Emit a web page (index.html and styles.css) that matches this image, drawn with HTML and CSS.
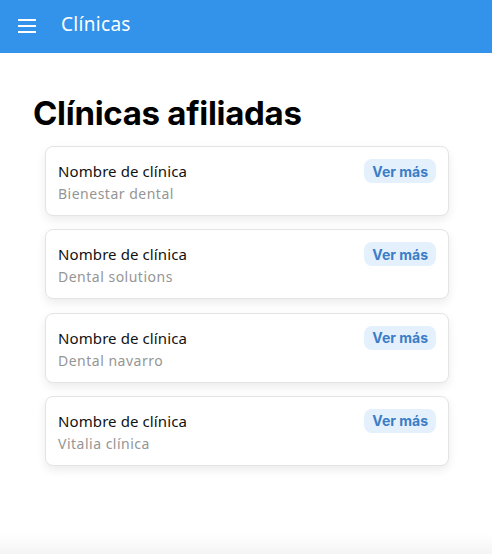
FILE: index.html
```html
<!DOCTYPE html>
<html lang="es">
<head>
<meta charset="utf-8">
<link rel="stylesheet" href="styles.css">
</head>
<body>
<header class="topbar">
  <svg class="menu" width="18" height="14" viewBox="0 0 18 14"><rect x="0" y="0" width="18" height="2" fill="#fff"/><rect x="0" y="6" width="18" height="2" fill="#fff"/><rect x="0" y="12" width="18" height="2" fill="#fff"/></svg>
  <span class="title">Clínicas</span>
</header>
<main class="content">
  <h1 class="heading">Clínicas afiliadas</h1>
  <div class="list">
    <div class="card"><div class="info"><div class="label">Nombre de clínica</div><div class="name">Bienestar dental</div></div><button class="more">Ver más</button></div>
    <div class="card"><div class="info"><div class="label">Nombre de clínica</div><div class="name">Dental solutions</div></div><button class="more">Ver más</button></div>
    <div class="card"><div class="info"><div class="label">Nombre de clínica</div><div class="name">Dental navarro</div></div><button class="more">Ver más</button></div>
    <div class="card"><div class="info"><div class="label">Nombre de clínica</div><div class="name">Vitalia clínica</div></div><button class="more">Ver más</button></div>
  </div>
</main>
<div class="bottomfade"></div>
</body>
</html>
```
FILE: styles.css
```css
html, body { margin: 0; padding: 0; background: #fff; }
body { width: 492px; height: 554px; overflow: hidden; position: relative; font-family: "Open Sans", sans-serif; }
.topbar { height: 53px; background: #3393EB; display: flex; align-items: center; padding-left: 18px; box-sizing: border-box; }
.menu { display: block; margin-top: -1px; }
.title { color: #fff; font-size: 19px; margin-left: 25px; font-family: "Noto Sans", sans-serif; letter-spacing: 0.3px; margin-top: -5px; }
.content { padding: 40px 43px 0 33px; }
.heading { margin: 0 0 13px; font-family: Inter, sans-serif; font-weight: 700; font-size: 33px; letter-spacing: -0.3px; line-height: 40px; color: #000; }
.list { display: flex; flex-direction: column; gap: 13.33px; padding-left: 12px; }
.card { height: 70px; box-sizing: border-box; border-radius: 8px; background: #fff; border: 1px solid #e4e4e4; box-shadow: 0 4px 10px rgba(0,0,0,0.08); display: flex; justify-content: space-between; align-items: flex-start; padding: 12px 12px 0 12px; }
.info { margin-top: -1px; }
.label { font-family: "Noto Sans", sans-serif; font-size: 15px; color: #111; line-height: 22px; margin-top: 2px; letter-spacing: 0.1px; }
.name { font-family: "Noto Sans", sans-serif; font-size: 14px; color: #959595; line-height: 22px; letter-spacing: 0.5px; margin-top: 1px; }
.more { border: none; background: #E4F1FD; color: #3B7DC6; font-family: Inter, sans-serif; font-weight: 700; font-size: 14px; border-radius: 8px; height: 24px; padding: 0 8px; margin-top: 0; }
.bottomfade { position: absolute; left: 0; right: 0; bottom: 0; height: 20px; background: linear-gradient(#fff, #f4f4f4); }
```
